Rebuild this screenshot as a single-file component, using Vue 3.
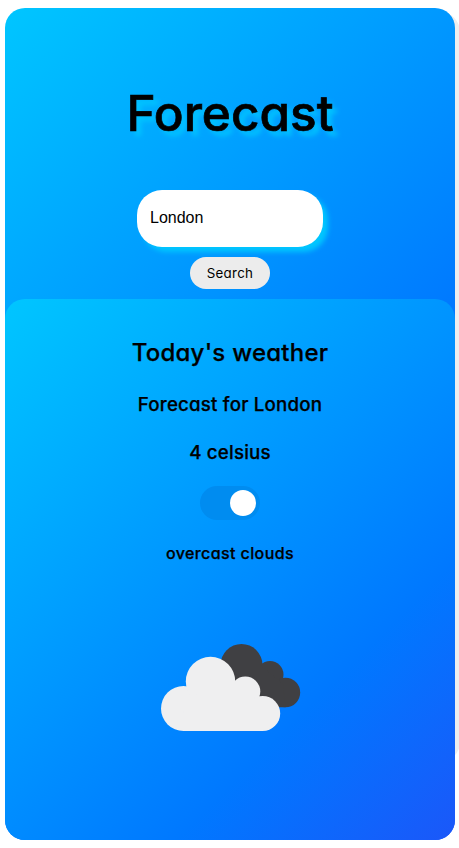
<script setup>
import { ref } from 'vue'

const city = ref('London')
const celsius = ref(true)
</script>

<template>
  <main class="app">
    <h1>Forecast</h1>
    <form class="search" @submit.prevent>
      <input v-model="city" type="text" aria-label="City" />
      <button type="submit">Search</button>
    </form>
    <section class="weather">
      <h2>Today's weather</h2>
      <h3>Forecast for London</h3>
      <h3 class="temp">4 celsius</h3>
      <label class="switch">
        <input v-model="celsius" type="checkbox" />
        <span class="knob"></span>
      </label>
      <h4>overcast clouds</h4>
      <svg class="icon" width="140" height="88" viewBox="0 0 140 88">
        <g fill="#404043">
          <circle cx="80.500" cy="21" r="21" />
          <circle cx="109" cy="30.500" r="13.500" />
          <circle cx="124.500" cy="48.500" r="14.700" />
          <path d="M70 20H98L122 40L124.500 63.200H90Z" />
        </g>
        <g fill="#efeff0">
          <circle cx="22.500" cy="64.500" r="22.500" />
          <circle cx="49.500" cy="37.500" r="24.700" />
          <circle cx="84.300" cy="47.500" r="15" />
          <circle cx="101.700" cy="69.500" r="17.500" />
          <path d="M22.500 87H102V65L85 45L50 35L22 65Z" />
        </g>
      </svg>
    </section>
  </main>
</template>

<style>
body {
  margin: 0;
  background: #fff;
  overflow-x: hidden;
}
</style>

<style scoped>
.app {
  position: relative;
  box-sizing: border-box;
  width: 450px;
  height: 832px;
  margin: 8px 4px 8px 5px;
  display: flex;
  flex-direction: column;
  align-items: center;
  border-radius: 20px;
  background: linear-gradient(135deg, #00c6ff 0%, #0078ff 59%, #1b57f9 100%);
  font-family: Inter, sans-serif;
  font-feature-settings: 'cv11' 1;
  color: #000;
}
/* grey panel showing past the right edge */
.app::before {
  content: '';
  position: absolute;
  z-index: -1;
  top: 4px;
  left: 5px;
  width: 450px;
  height: 750px;
  border-radius: 20px;
  background: #eeeeee;
}
h1 {
  margin: 68px 0 0;
  height: 75px;
  line-height: 75px;
  font-size: 49.500px;
  font-weight: 500;
  letter-spacing: 0;
  -webkit-text-stroke: 0.7px #000;
  text-shadow: 5px 5px 5px #00c6ff;
}
.search {
  margin-top: 39px;
  display: flex;
  flex-direction: column;
  align-items: center;
  gap: 10px;
}
.search input {
  box-sizing: border-box;
  width: 186px;
  height: 57px;
  padding: 0 13px 2px;
  border: 0;
  border-radius: 25px;
  background: #fff;
  color: #000;
  box-shadow: 5px 5px 5px #00c6ff;
  font: 16px 'Liberation Sans', sans-serif;
}
.search button {
  width: 80px;
  height: 32px;
  padding: 0 0 1px;
  border: 0;
  border-radius: 16px;
  background: #ececec;
  color: #000;
  font: 13.333px Inter, sans-serif;
  font-feature-settings: 'cv11' 1;
  letter-spacing: 0.3px;
}
.weather {
  box-sizing: border-box;
  width: 450px;
  height: 541px;
  margin-top: 10px;
  padding-top: 36px;
  display: flex;
  flex-direction: column;
  align-items: center;
  border-radius: 20px;
  background: linear-gradient(135deg, #00c6ff 0%, #0078ff 72%, #1b57f9 100%);
}
h2, h3, h4 {
  margin: 0;
  font-weight: 500;
  -webkit-text-stroke: 0.25px #000;
}
h2 {
  font-size: 24px;
  line-height: 36px;
  letter-spacing: 0.25px;
}
h3 {
  margin-top: 20px;
  font-size: 18.720px;
  line-height: 28px;
  letter-spacing: 0.2px;
}
.temp {
  margin-top: 20px;
}
.switch {
  box-sizing: border-box;
  width: 60px;
  height: 34px;
  margin-top: 19px;
  padding: 4px;
  display: flex;
  justify-content: flex-end;
  border-radius: 17px;
  background: #008cf0;
}
.switch input {
  display: none;
}
.knob {
  width: 26px;
  height: 26px;
  border-radius: 50%;
  background: #fff;
}
h4 {
  margin-top: 21px;
  font-size: 16px;
  line-height: 24px;
  letter-spacing: 0.4px;
}
.icon {
  display: block;
  margin: 79px 0 0 2px;
}
</style>
